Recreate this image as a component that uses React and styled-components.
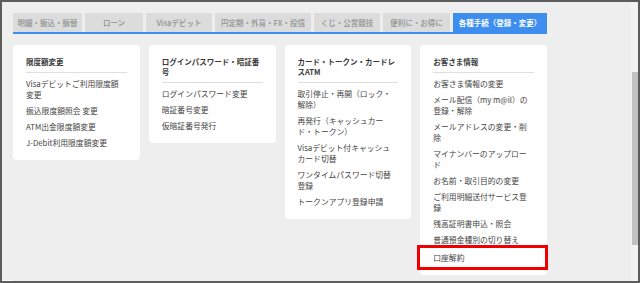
import React from 'react';
import styled, { createGlobalStyle } from 'styled-components';

const GlobalStyle = createGlobalStyle`
  html, body {
    margin: 0;
    padding: 0;
    background: #eeeeee;
  }
  body {
    font-family: "Noto Sans CJK JP", "Noto Sans", sans-serif;
  }
`;

const tabs = [
    { label: '明細・振込・振替', width: 69 },
    { label: 'ローン', width: 58 },
    { label: 'Visaデビット', width: 66 },
    { label: '円定期・外貨・FX・投信', width: 96 },
    { label: 'くじ・公営競技', width: 66 },
    { label: '便利に・お得に', width: 67 },
    { label: '各種手続（登録・変更）', width: 94, active: true },
];

const menus = [
    {
        title: ['限度額変更'],
        items: [
            ['Visaデビットご利用限度額', '変更'],
            ['振込限度額照会 変更'],
            ['ATM出金限度額変更'],
            ['J-Debit利用限度額変更'],
        ],
    },
    {
        title: ['ログインパスワード・暗証番', '号'],
        items: [
            ['ログインパスワード変更'],
            ['暗証番号変更'],
            ['仮暗証番号発行'],
        ],
    },
    {
        title: ['カード・トークン・カードレ', 'スATM'],
        items: [
            ['取引停止・再開（ロック・', '解除）'],
            ['再発行（キャッシュカー', 'ド・トークン）'],
            ['Visaデビット付キャッシュ', 'カード切替'],
            ['ワンタイムパスワード切替', '登録'],
            ['トークンアプリ登録申請'],
        ],
    },
    {
        title: ['お客さま情報'],
        items: [
            ['お客さま情報の変更'],
            ['メール配信（my m@il）の', '登録・解除'],
            ['メールアドレスの変更・削', '除'],
            ['マイナンバーのアップロー', 'ド'],
            ['お名前・取引目的の変更'],
            ['ご利用明細送付サービス登', '録'],
            ['残高証明書申込・照会'],
            ['普通預金種別の切り替え'],
            ['口座解約'],
        ],
        highlight: '口座解約',
    },
];

function Lines({ lines }) {
    return lines.map((line, i) => <Line key={i}>{line}</Line>);
}

export default function App() {
    return (
        <>
            <GlobalStyle />
            <Frame>
                <Page>
                    <TabBar>
                        {tabs.map((tab) => (
                            <Tab key={tab.label} $width={tab.width} $active={tab.active}>
                                {tab.label}
                            </Tab>
                        ))}
                    </TabBar>
                    <Grid>
                        {menus.map((menu, index) => (
                            <Card key={index}>
                                <Title>
                                    <Lines lines={menu.title} />
                                </Title>
                                <Divider />
                                <List>
                                    {menu.items.map((item) => (
                                        <Item key={item[0]} $marked={item[0] === menu.highlight}>
                                            <Lines lines={item} />
                                        </Item>
                                    ))}
                                </List>
                            </Card>
                        ))}
                    </Grid>
                    <HScroll />
                </Page>
                <ScrollTrack>
                    <ScrollThumb />
                </ScrollTrack>
            </Frame>
        </>
    );
}

const Frame = styled.div`
  box-sizing: border-box;
  width: 640px;
  height: 283px;
  border: 2px solid #5c5c5c;
  background: #eeeeee;
  display: flex;
  overflow: hidden;
`;

const Page = styled.div`
  flex: 1;
  padding: 11px 0 0 11px;
  display: flex;
  flex-direction: column;
  position: relative;
`;

const TabBar = styled.div`
  display: flex;
  gap: 3px;
  width: 534px;
  height: 19px;
  border-bottom: 2px solid #3d8eee;
`;

const Tab = styled.div`
  width: ${(p) => p.$width}px;
  height: ${(p) => (p.$active ? 21 : 19)}px;
  background: ${(p) => (p.$active ? '#3d8eee' : '#dcdcdc')};
  color: ${(p) => (p.$active ? '#ffffff' : '#9d9d9d')};
  font-size: 7.5px;
  font-weight: 700;
  display: flex;
  align-items: center;
  justify-content: center;
  white-space: nowrap;
  padding-bottom: ${(p) => (p.$active ? 2 : 0)}px;
  box-sizing: border-box;
`;

const Grid = styled.div`
  display: grid;
  grid-template-columns: repeat(4, 1fr);
  gap: 9px;
  width: 534px;
  margin-top: 11px;
  align-items: start;
`;

const Card = styled.div`
  background: #ffffff;
  border-radius: 4px;
  padding: 12px 13px 12px;
`;

const Title = styled.div`
  font-size: 7.5px;
  font-weight: 700;
  line-height: 10px;
  color: #3a3a3a;
`;

const Line = styled.div`
  white-space: nowrap;
`;

const Divider = styled.div`
  height: 1px;
  background: #dedede;
  margin-top: 5px;
`;

const List = styled.div`
  display: flex;
  flex-direction: column;
  gap: 5px;
  padding-top: 5px;
`;

const Item = styled.div`
  position: relative;
  font-size: 7.8px;
  line-height: 11px;
  color: #444444;
  margin-top: ${(p) => (p.$marked ? 2 : 0)}px;

  &::after {
    content: '';
    display: ${(p) => (p.$marked ? 'block' : 'none')};
    position: absolute;
    left: -16px;
    right: -14px;
    top: -7px;
    bottom: -7px;
    border: 3px solid #ee0000;
  }
`;

const HScroll = styled.div`
  position: absolute;
  left: 0;
  bottom: 0;
  width: 11px;
  height: 1px;
  background: #ffffff;
`;

const ScrollTrack = styled.div`
  width: 7px;
  background: #f3f3f3;
  padding-top: 70px;
  box-sizing: border-box;
`;

const ScrollThumb = styled.div`
  width: 6px;
  margin-left: 1px;
  height: 173px;
  background: #c1c1c1;
`;
